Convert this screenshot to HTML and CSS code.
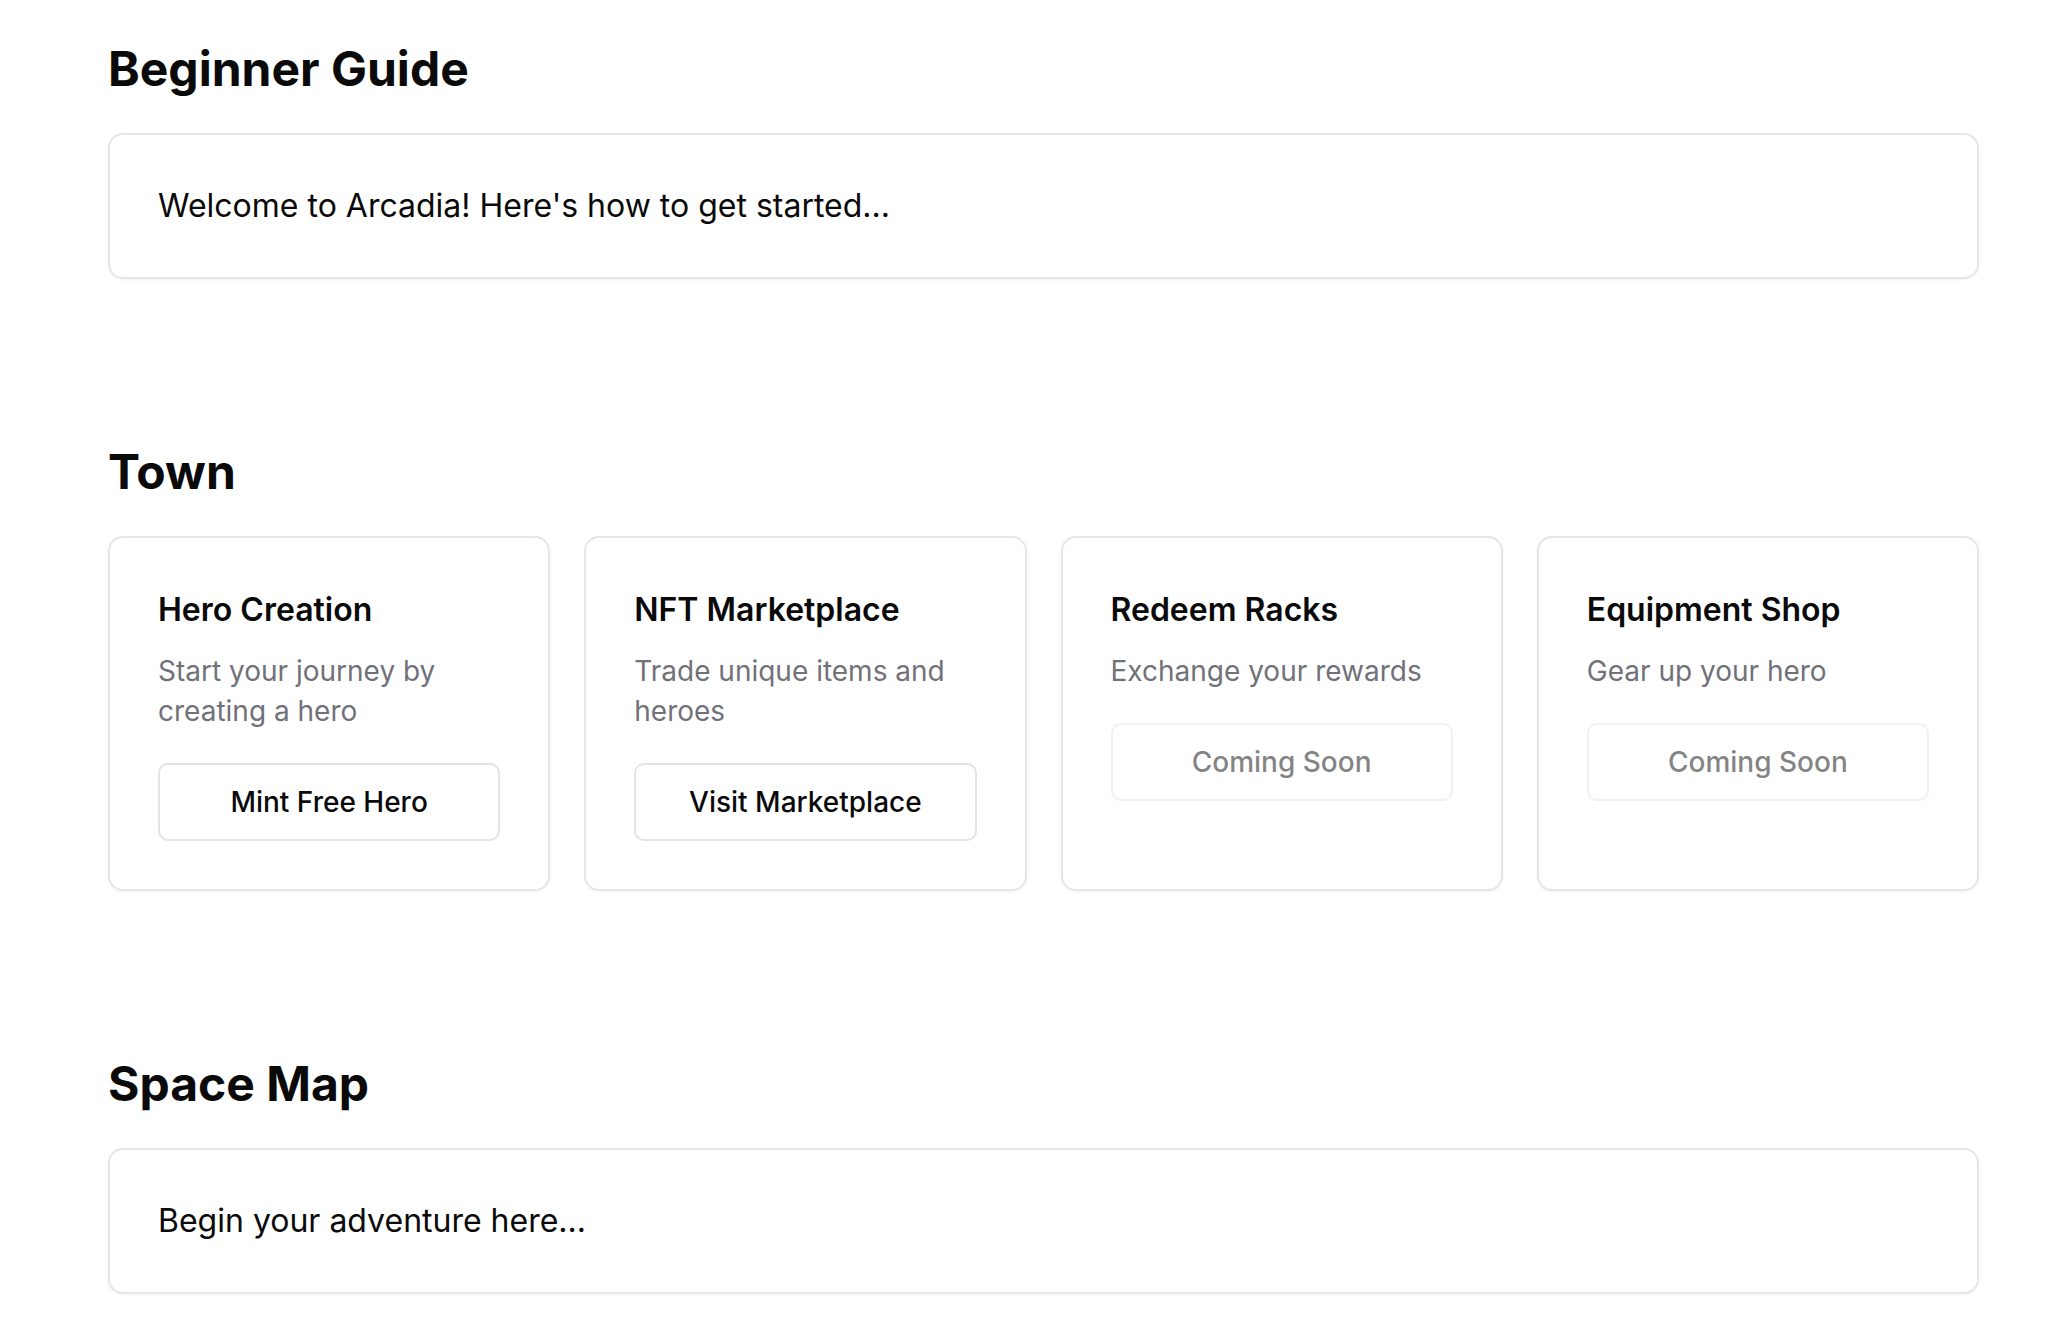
FILE: index.html
```html
<!DOCTYPE html>
<html lang="en">
<head>
<meta charset="utf-8">
<title>Arcadia</title>
<link rel="stylesheet" href="styles.css">
</head>
<body>
<main class="page">
  <section class="section">
    <h2 class="section-title">Beginner Guide</h2>
    <div class="card card-wide">
      <p class="lead">Welcome to Arcadia! Here's how to get started...</p>
    </div>
  </section>

  <section class="section">
    <h2 class="section-title">Town</h2>
    <div class="grid">
      <div class="card">
        <h3 class="card-title">Hero Creation</h3>
        <p class="card-desc">Start your journey by creating a hero</p>
        <button class="btn">Mint Free Hero</button>
      </div>
      <div class="card">
        <h3 class="card-title">NFT Marketplace</h3>
        <p class="card-desc">Trade unique items and heroes</p>
        <button class="btn">Visit Marketplace</button>
      </div>
      <div class="card">
        <h3 class="card-title">Redeem Racks</h3>
        <p class="card-desc">Exchange your rewards</p>
        <button class="btn btn-disabled" disabled>Coming Soon</button>
      </div>
      <div class="card">
        <h3 class="card-title">Equipment Shop</h3>
        <p class="card-desc">Gear up your hero</p>
        <button class="btn btn-disabled" disabled>Coming Soon</button>
      </div>
    </div>
  </section>

  <section class="section">
    <h2 class="section-title">Space Map</h2>
    <div class="card card-wide">
      <p class="lead">Begin your adventure here...</p>
    </div>
  </section>
</main>
</body>
</html>
```

FILE: styles.css
```css
* {
  box-sizing: border-box;
}

html, body {
  margin: 0;
  padding: 0;
  background: #ffffff;
}

body {
  font-family: Inter, "Noto Sans", "Liberation Sans", sans-serif;
  color: #0a0a0a;
}

.page {
  padding: 39px 91px 40px 108px;
  display: flex;
  flex-direction: column;
  gap: 163px;
}

.section {
  display: flex;
  flex-direction: column;
}

.section-title {
  margin: 0 0 34px 0;
  font-size: 48px;
  line-height: 60px;
  font-weight: 700;
  color: #0a0a0a;
}

.card {
  background: #ffffff;
  border: 2px solid #e6e6e6;
  border-radius: 15px;
  padding: 48px;
  box-shadow: 0 1px 3px rgba(0, 0, 0, 0.05);
  display: flex;
  flex-direction: column;
  align-items: stretch;
}

.lead {
  margin: 0;
  font-size: 32px;
  line-height: 46px;
  font-weight: 400;
  color: #0a0a0a;
}

.grid {
  display: grid;
  grid-template-columns: repeat(4, 1fr);
  gap: 34px;
}

.card-title {
  margin: 0 0 17px 0;
  font-size: 32px;
  line-height: 48px;
  font-weight: 600;
  color: #0a0a0a;
}

.card-desc {
  margin: 0 0 32px 0;
  font-size: 28px;
  line-height: 40px;
  font-weight: 400;
  color: #71717a;
}

.btn {
  font-family: inherit;
  font-size: 28px;
  line-height: 40px;
  font-weight: 500;
  color: #0a0a0a;
  background: #ffffff;
  border: 2px solid #e4e4e7;
  border-radius: 10px;
  padding: 17px 16px;
  width: 100%;
  text-align: center;
  cursor: pointer;
}

.btn-disabled {
  opacity: 0.5;
  cursor: default;
}
```
